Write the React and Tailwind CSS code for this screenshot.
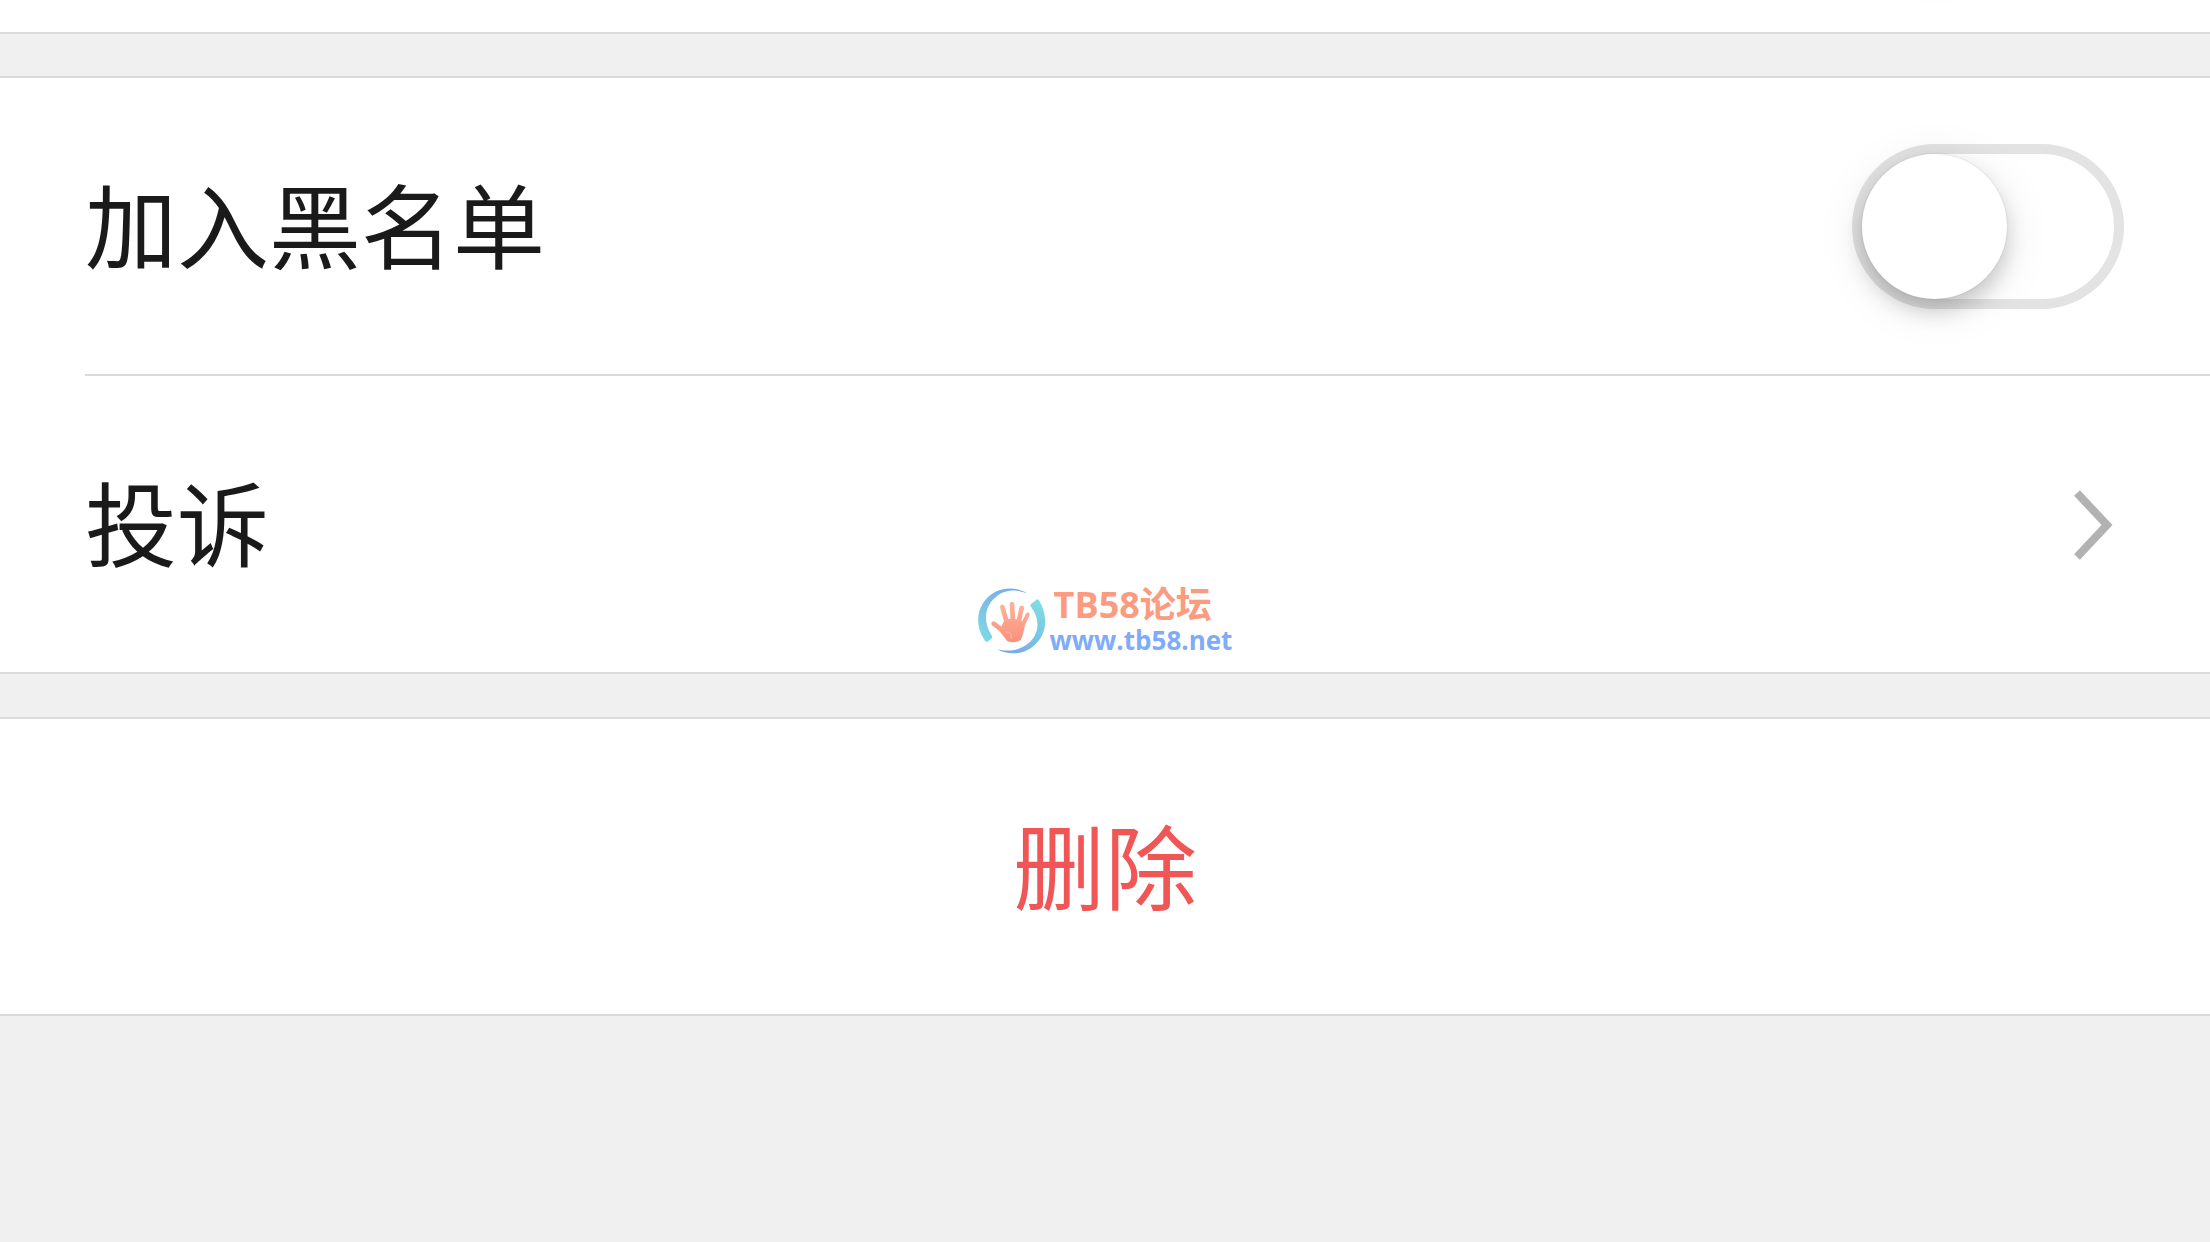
import React, { useState } from 'react';

const Switch = ({ id, checked, onChange }) => (
  <input
    id={id}
    type="checkbox"
    role="switch"
    checked={checked}
    onChange={e => onChange(e.target.checked)}
    className="appearance-none shrink-0 w-[272px] h-[165px] rounded-full border-[10px] border-[#e3e3e3] bg-white cursor-pointer checked:bg-green-500 checked:border-green-500 before:block before:size-[145px] before:rounded-full before:bg-white before:shadow-[0_12px_20px_rgba(0,0,0,0.17),0_8px_48px_rgba(0,0,0,0.1),0_0_2px_rgba(0,0,0,0.15)] checked:before:translate-x-[107px]"
  />
);

const ChevronIcon = () => (
  <svg className="w-10 h-[72px]" viewBox="0 0 40 72" fill="none" stroke="#b2b2b2" strokeWidth="8" aria-hidden="true">
    <path d="M3 5 L33 37 L3 69" />
  </svg>
);

const HandLogo = () => (
  <svg className="w-[68px] h-[66px]" viewBox="0 0 204 198" aria-hidden="true">
    <defs>
      <linearGradient id="ringLeft" x1="0.8" y1="0" x2="0.2" y2="1">
        <stop offset="0" stopColor="#78a8ea" />
        <stop offset="1" stopColor="#7ed8e6" />
      </linearGradient>
      <linearGradient id="ringRight" x1="0.8" y1="0" x2="0.2" y2="1">
        <stop offset="0" stopColor="#7edde2" />
        <stop offset="1" stopColor="#78a8ea" />
      </linearGradient>
      <linearGradient id="hand" gradientUnits="userSpaceOnUse" x1="0" y1="40" x2="0" y2="165">
        <stop offset="0" stopColor="#ffb59c" />
        <stop offset="1" stopColor="#fb8f7c" />
      </linearGradient>
    </defs>
    <path fill="url(#ringLeft)" d="M147 16 C115 -4 70 -4 38 20 C-2 51 -12 108 18 154 Q22 163 28 162 L42 150 Q44 147 39 139 C14 98 20 50 58 23 C84 4 117 4 147 16 Z" />
    <path fill="url(#ringRight)" d="M158 49 L176 35 Q180 32 184 39 C212 86 206 138 171 170 C138 201 92 203 56 183 C92 193 126 187 152 165 C184 137 188 96 159 56 Q156 52 158 49 Z" />
    <g stroke="url(#hand)" strokeLinecap="round" fill="none">
      <path strokeWidth="14" d="M73 57 L88 108" />
      <path strokeWidth="14" d="M102 48 L105 105" />
      <path strokeWidth="14" d="M131 60 L120 110" />
      <path strokeWidth="12" d="M149 80 L132 116" />
      <path strokeWidth="14" d="M47 107 L82 134" />
    </g>
    <path fill="url(#hand)" d="M79 96 Q104 88 130 98 L140 108 C140 128 133 143 129 155 Q110 168 88 160 C80 148 72 140 64 129 Z" />
    <path fill="none" stroke="#ffc0ac" strokeWidth="3" d="M84 132 Q102 130 100 152" />
  </svg>
);

const Watermark = () => (
  <div className="pointer-events-none absolute inset-0 flex items-center justify-center">
    <div className="flex items-center gap-1">
      <HandLogo />
      <div className="flex flex-col pt-0.5 font-bold whitespace-nowrap font-['Open_Sans','Noto_Sans_CJK_SC',sans-serif]">
        <span className="pl-1 text-[36px] leading-[36px] text-[#fb9b80]">TB58论坛</span>
        <span className="text-[26px] leading-[34px] text-[#7fabf8]">www.tb58.net</span>
      </div>
    </div>
  </div>
);

const App = () => {
  const [blocked, setBlocked] = useState(false);
  return (
    <div className="relative min-h-screen bg-[#f0f0f0] text-[92px] leading-none text-[#1a1a1a] font-['Noto_Sans_CJK_SC',sans-serif]">
      {/* bottom edge of the previous group, with the shadow of its switch */}
      <div className="relative h-[34px] overflow-hidden bg-white border-b-2 border-[#dadada]">
        <span className="absolute right-[203px] bottom-[75px] size-[145px] rounded-full shadow-[0_12px_20px_rgba(0,0,0,0.17),0_8px_48px_rgba(0,0,0,0.1)]" />
      </div>

      <div className="mt-[42px] bg-white border-y-2 border-[#dadada]">
        <div className="flex items-center justify-between h-[296px] pl-[85px] pr-[86px]">
          <label htmlFor="blacklist" className="pb-2">加入黑名单</label>
          <Switch id="blacklist" checked={blocked} onChange={setBlocked} />
        </div>
        <div className="ml-[85px] h-0.5 bg-[#dadada]" />
        <button type="button" className="flex items-center justify-between w-full h-[296px] pl-[85px] pr-24 cursor-pointer">
          <span className="pb-2">投诉</span>
          <ChevronIcon />
        </button>
      </div>

      <div className="mt-[43px] bg-white border-y-2 border-[#dadada]">
        <button type="button" className="w-full h-[295px] pb-2 text-[#f05656] cursor-pointer">
          删除
        </button>
      </div>

      <Watermark />
    </div>
  );
};

export default App;
